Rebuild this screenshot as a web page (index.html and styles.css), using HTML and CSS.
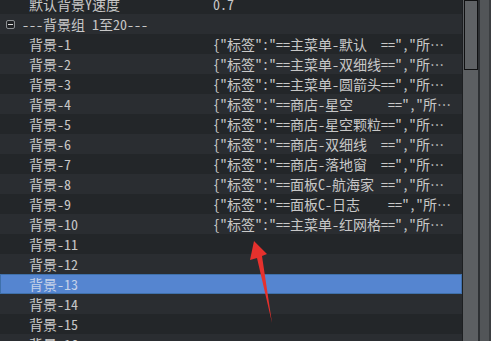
FILE: index.html
```html
<!doctype html>
<html>
    <head>
        <meta charset="utf-8" />
        <title>背景组</title>
        <link rel="stylesheet" href="styles.css">
    </head>
    <body>
        <div class="view">
            <div class="tree">
                <div class="row odd">
                    <span class="name">默认背景Y速度</span>
                    <span class="val">0.7</span>
                </div>
                <div class="row even group">
                    <span class="toggle"></span>
                    <span>---背景组 1至20---</span>
                </div>
                <div class="row odd">
                    <span class="name">背景-1</span>
                    <span class="val">{"标签":"==主菜单-默认  ==","所…</span>
                </div>
                <div class="row even">
                    <span class="name">背景-2</span>
                    <span class="val">{"标签":"==主菜单-双细线==","所…</span>
                </div>
                <div class="row odd">
                    <span class="name">背景-3</span>
                    <span class="val">{"标签":"==主菜单-圆箭头==","所…</span>
                </div>
                <div class="row even">
                    <span class="name">背景-4</span>
                    <span class="val">{"标签":"==商店-星空     ==","所…</span>
                </div>
                <div class="row odd">
                    <span class="name">背景-5</span>
                    <span class="val">{"标签":"==商店-星空颗粒==","所…</span>
                </div>
                <div class="row even">
                    <span class="name">背景-6</span>
                    <span class="val">{"标签":"==商店-双细线  ==","所…</span>
                </div>
                <div class="row odd">
                    <span class="name">背景-7</span>
                    <span class="val">{"标签":"==商店-落地窗  ==","所…</span>
                </div>
                <div class="row even">
                    <span class="name">背景-8</span>
                    <span class="val">{"标签":"==面板C-航海家 ==","所…</span>
                </div>
                <div class="row odd">
                    <span class="name">背景-9</span>
                    <span class="val">{"标签":"==面板C-日志    ==","所…</span>
                </div>
                <div class="row even">
                    <span class="name">背景-10</span>
                    <span class="val">{"标签":"==主菜单-红网格==","所…</span>
                </div>
                <div class="row odd">
                    <span class="name">背景-11</span>
                </div>
                <div class="row even">
                    <span class="name">背景-12</span>
                </div>
                <div class="row selected">
                    <span class="name">背景-13</span>
                </div>
                <div class="row even">
                    <span class="name">背景-14</span>
                </div>
                <div class="row odd">
                    <span class="name">背景-15</span>
                </div>
                <div class="row even">
                    <span class="name">背景-16</span>
                </div>
            </div>
            <div class="scrollbar">
                <div class="thumb"></div>
            </div>
            <div class="gap"></div>
            <div class="side"></div>
        </div>
        <svg class="arrow" width="491" height="341" viewBox="0 0 491 341">
            <polygon points="254,241 267,254 262,256 272,323 257,258 250,260" fill="#e5312d" />
        </svg>
    </body>
</html>
```

FILE: styles.css
```css
body {
    margin: 0;
    width: 491px;
    height: 341px;
    overflow: hidden;
    background: #232629;
    font-family: "Noto Sans Mono CJK SC", "DejaVu Sans Mono", "Noto Sans CJK SC", monospace;
    font-size: 14px;
    color: #c8c8c8;
}
.view {
    display: flex;
    height: 341px;
}
.tree {
    width: 463px;
    margin-top: -6px;
    overflow: hidden;
}
.row {
    display: grid;
    grid-template-columns: 184px 1fr;
    height: 20px;
    line-height: 20px;
    padding-left: 29px;
    box-sizing: border-box;
    white-space: pre;
    overflow: hidden;
}
.odd {
    background: #232629;
}
.even {
    background: #2a2d31;
}
.group {
    display: flex;
    align-items: center;
    gap: 7px;
    padding-left: 6px;
}
.toggle {
    position: relative;
    width: 7px;
    height: 7px;
    border: 1px solid #8c8f92;
    border-radius: 2px;
    background: #1f2124;
}
.toggle::after {
    content: "";
    position: absolute;
    left: 1px;
    right: 1px;
    top: 3px;
    height: 1px;
    background: #e0e0e0;
}
.selected {
    background: #5585d0;
    border: 1px solid #3f70aa;
    padding-left: 28px;
    line-height: 18px;
    color: #c4d2ea;
}
.val {
    overflow: hidden;
}
.scrollbar {
    width: 15px;
    background: #5c5f62;
    border-left: 1px solid #1d1f21;
}
.thumb {
    height: 70px;
    margin-left: 1px;
    border: 1px solid #101112;
    background: #5f6265;
    box-sizing: border-box;
}
.gap {
    width: 2px;
    background: #2d3033;
}
.side {
    width: 9px;
    background: #525558;
    border-right: 2px solid #3a3d40;
}
.arrow {
    position: absolute;
    left: 0;
    top: 0;
}
```
